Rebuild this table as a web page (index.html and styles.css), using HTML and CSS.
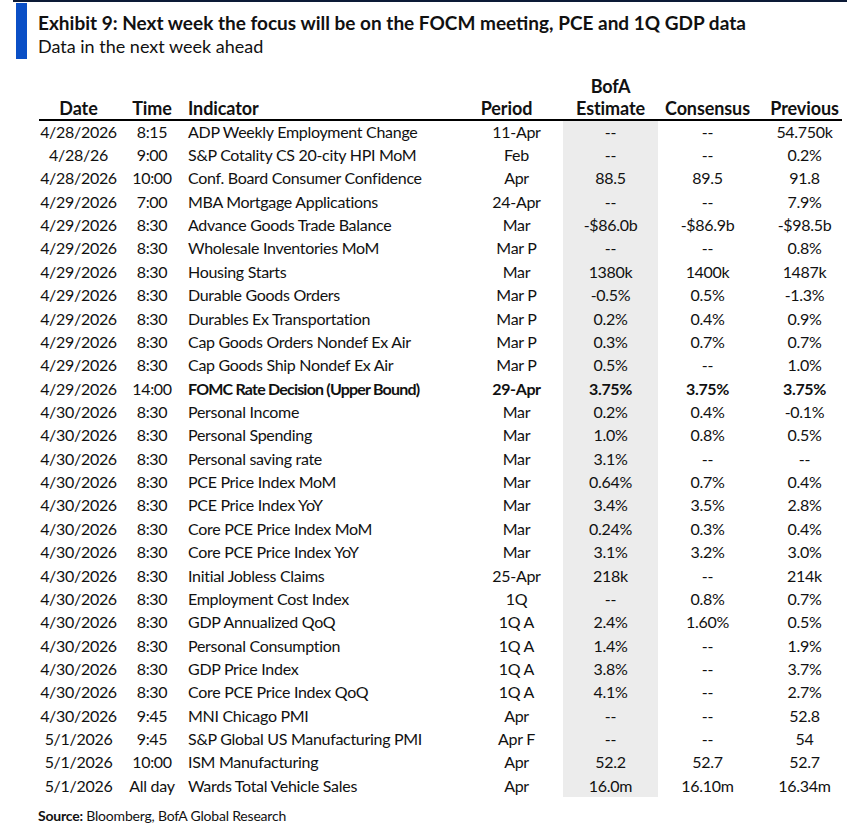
FILE: index.html
```html
<!DOCTYPE html>
<html>
<head>
<meta charset="utf-8">
<link rel="stylesheet" href="styles.css">
</head>
<body>
<div class="page">
  <div class="topline"></div>
  <div class="titlebox">
    <div class="bar"></div>
    <div class="titles">
      <div class="title">Exhibit 9: Next week the focus will be on the FOCM meeting, PCE and 1Q GDP data</div>
      <div class="subtitle">Data in the next week ahead</div>
    </div>
  </div>
  <table class="tbl">
    <colgroup>
      <col class="c-date"><col class="c-time"><col class="c-ind"><col class="c-per"><col class="c-est"><col class="c-con"><col class="c-prev">
    </colgroup>
    <thead>
      <tr>
        <th>Date</th><th>Time</th><th class="left">Indicator</th><th class="per">Period</th><th>BofA<br>Estimate</th><th>Consensus</th><th class="prev">Previous</th>
      </tr>
    </thead>
    <tbody>
      <tr><td>4/28/2026</td><td>8:15</td><td class="left">ADP Weekly Employment Change</td><td>11-Apr</td><td class="est">--</td><td>--</td><td class="prev">54.750k</td></tr>
      <tr><td>4/28/26</td><td>9:00</td><td class="left">S&amp;P Cotality CS 20-city HPI MoM</td><td>Feb</td><td class="est">--</td><td>--</td><td class="prev">0.2%</td></tr>
      <tr><td>4/28/2026</td><td>10:00</td><td class="left">Conf. Board Consumer Confidence</td><td>Apr</td><td class="est">88.5</td><td>89.5</td><td class="prev">91.8</td></tr>
      <tr><td>4/29/2026</td><td>7:00</td><td class="left">MBA Mortgage Applications</td><td>24-Apr</td><td class="est">--</td><td>--</td><td class="prev">7.9%</td></tr>
      <tr><td>4/29/2026</td><td>8:30</td><td class="left">Advance Goods Trade Balance</td><td>Mar</td><td class="est">-$86.0b</td><td>-$86.9b</td><td class="prev">-$98.5b</td></tr>
      <tr><td>4/29/2026</td><td>8:30</td><td class="left">Wholesale Inventories MoM</td><td>Mar P</td><td class="est">--</td><td>--</td><td class="prev">0.8%</td></tr>
      <tr><td>4/29/2026</td><td>8:30</td><td class="left">Housing Starts</td><td>Mar</td><td class="est">1380k</td><td>1400k</td><td class="prev">1487k</td></tr>
      <tr><td>4/29/2026</td><td>8:30</td><td class="left">Durable Goods Orders</td><td>Mar P</td><td class="est">-0.5%</td><td>0.5%</td><td class="prev">-1.3%</td></tr>
      <tr><td>4/29/2026</td><td>8:30</td><td class="left">Durables Ex Transportation</td><td>Mar P</td><td class="est">0.2%</td><td>0.4%</td><td class="prev">0.9%</td></tr>
      <tr><td>4/29/2026</td><td>8:30</td><td class="left">Cap Goods Orders Nondef Ex Air</td><td>Mar P</td><td class="est">0.3%</td><td>0.7%</td><td class="prev">0.7%</td></tr>
      <tr><td>4/29/2026</td><td>8:30</td><td class="left">Cap Goods Ship Nondef Ex Air</td><td>Mar P</td><td class="est">0.5%</td><td>--</td><td class="prev">1.0%</td></tr>
      <tr class="bold"><td class="norm">4/29/2026</td><td class="norm">14:00</td><td class="left">FOMC Rate Decision (Upper Bound)</td><td>29-Apr</td><td class="est">3.75%</td><td>3.75%</td><td class="prev">3.75%</td></tr>
      <tr><td>4/30/2026</td><td>8:30</td><td class="left">Personal Income</td><td>Mar</td><td class="est">0.2%</td><td>0.4%</td><td class="prev">-0.1%</td></tr>
      <tr><td>4/30/2026</td><td>8:30</td><td class="left">Personal Spending</td><td>Mar</td><td class="est">1.0%</td><td>0.8%</td><td class="prev">0.5%</td></tr>
      <tr><td>4/30/2026</td><td>8:30</td><td class="left">Personal saving rate</td><td>Mar</td><td class="est">3.1%</td><td>--</td><td class="prev">--</td></tr>
      <tr><td>4/30/2026</td><td>8:30</td><td class="left">PCE Price Index MoM</td><td>Mar</td><td class="est">0.64%</td><td>0.7%</td><td class="prev">0.4%</td></tr>
      <tr><td>4/30/2026</td><td>8:30</td><td class="left">PCE Price Index YoY</td><td>Mar</td><td class="est">3.4%</td><td>3.5%</td><td class="prev">2.8%</td></tr>
      <tr><td>4/30/2026</td><td>8:30</td><td class="left">Core PCE Price Index MoM</td><td>Mar</td><td class="est">0.24%</td><td>0.3%</td><td class="prev">0.4%</td></tr>
      <tr><td>4/30/2026</td><td>8:30</td><td class="left">Core PCE Price Index YoY</td><td>Mar</td><td class="est">3.1%</td><td>3.2%</td><td class="prev">3.0%</td></tr>
      <tr><td>4/30/2026</td><td>8:30</td><td class="left">Initial Jobless Claims</td><td>25-Apr</td><td class="est">218k</td><td>--</td><td class="prev">214k</td></tr>
      <tr><td>4/30/2026</td><td>8:30</td><td class="left">Employment Cost Index</td><td>1Q</td><td class="est">--</td><td>0.8%</td><td class="prev">0.7%</td></tr>
      <tr><td>4/30/2026</td><td>8:30</td><td class="left">GDP Annualized QoQ</td><td>1Q A</td><td class="est">2.4%</td><td>1.60%</td><td class="prev">0.5%</td></tr>
      <tr><td>4/30/2026</td><td>8:30</td><td class="left">Personal Consumption</td><td>1Q A</td><td class="est">1.4%</td><td>--</td><td class="prev">1.9%</td></tr>
      <tr><td>4/30/2026</td><td>8:30</td><td class="left">GDP Price Index</td><td>1Q A</td><td class="est">3.8%</td><td>--</td><td class="prev">3.7%</td></tr>
      <tr><td>4/30/2026</td><td>8:30</td><td class="left">Core PCE Price Index QoQ</td><td>1Q A</td><td class="est">4.1%</td><td>--</td><td class="prev">2.7%</td></tr>
      <tr><td>4/30/2026</td><td>9:45</td><td class="left">MNI Chicago PMI</td><td>Apr</td><td class="est">--</td><td>--</td><td class="prev">52.8</td></tr>
      <tr><td>5/1/2026</td><td>9:45</td><td class="left">S&amp;P Global US Manufacturing PMI</td><td>Apr F</td><td class="est">--</td><td>--</td><td class="prev">54</td></tr>
      <tr><td>5/1/2026</td><td>10:00</td><td class="left">ISM Manufacturing</td><td>Apr</td><td class="est">52.2</td><td>52.7</td><td class="prev">52.7</td></tr>
      <tr><td>5/1/2026</td><td>All day</td><td class="left">Wards Total Vehicle Sales</td><td>Apr</td><td class="est">16.0m</td><td>16.10m</td><td class="prev">16.34m</td></tr>
    </tbody>
  </table>
  <div class="source"><b>Source:</b> Bloomberg, BofA Global Research</div>
</div>
</body>
</html>
```

FILE: styles.css
```css
* { box-sizing: border-box; }
html, body { margin: 0; padding: 0; background: #ffffff; }
body { font-family: Lato, "Liberation Sans", sans-serif; color: #111; }
.page { width: 847px; height: 824px; position: relative; overflow: hidden; }
.topline { margin-left: 13px; height: 2px; background: #0c1a36; }
.titlebox { display: flex; margin-top: 1px; margin-left: 16px; height: 56px; }
.bar { width: 11px; background: #0a4fc6; }
.titles { padding-left: 11px; }
.title { font-weight: 700; font-size: 19px; line-height: 24px; padding-top: 8px; color: #111; white-space: nowrap; }
.subtitle { font-size: 18px; line-height: 22px; color: #111; }
.tbl { margin-left: 39px; margin-top: 16px; border-collapse: collapse; table-layout: fixed; width: 803px; }
.c-date { width: 79px; }
.c-time { width: 68px; }
.c-ind { width: 284px; }
.c-per { width: 93px; }
.c-est { width: 95px; }
.c-con { width: 99px; }
.c-prev { width: 85px; }
.tbl th { font-weight: 700; font-size: 18px; line-height: 22px; text-align: center; vertical-align: bottom; padding: 0; border-bottom: 2px solid #000; white-space: nowrap; letter-spacing: -0.1px; }
.tbl th.left, .tbl td.left { text-align: left; padding-left: 2px; }
.tbl th.per { padding-right: 20px; }
.tbl th.prev, .tbl td.prev { padding-left: 10px; }
.tbl td { font-size: 16px; height: 23.36px; line-height: 20px; padding: 0; text-align: center; white-space: nowrap; letter-spacing: -0.3px; }
.tbl td.est { background: #ececec; }
.tbl tr.bold td { font-weight: 700; letter-spacing: -0.4px; }
.tbl tr.bold td.left { letter-spacing: -0.8px; }
.tbl tr.bold td.norm { font-weight: 400; letter-spacing: -0.3px; }
.source { margin-left: 38px; margin-top: 10px; font-size: 14px; line-height: 18px; letter-spacing: -0.2px; }
```
